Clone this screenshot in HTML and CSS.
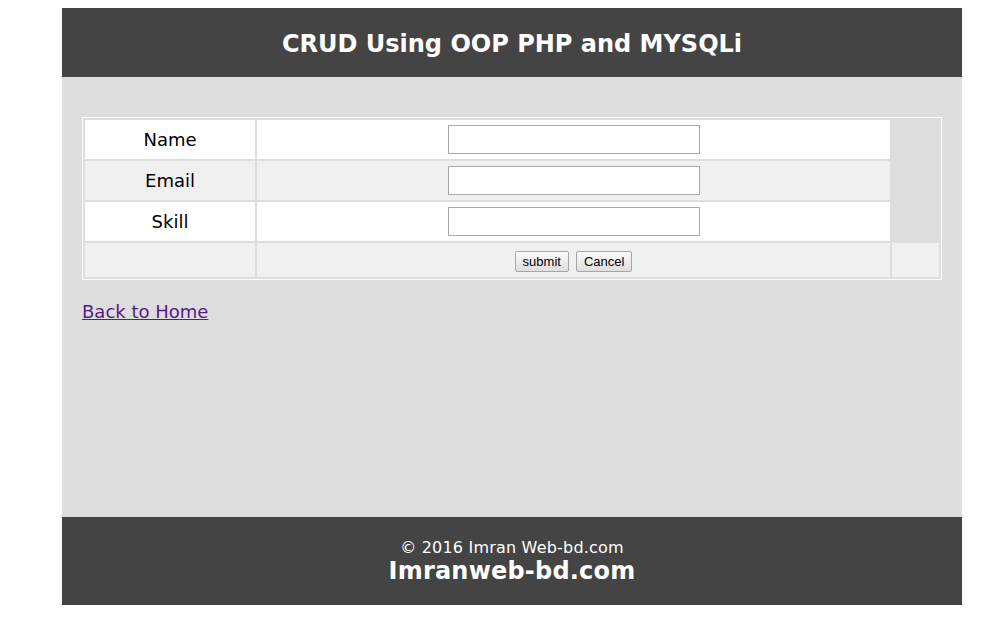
FILE: index.html
```html
<!DOCTYPE html>
<html>
<head>
<meta charset="utf-8">
<title>CRUD Using OOP PHP and MYSQLi</title>
<link rel="stylesheet" href="styles.css">
</head>
<body>
<div class="wrapper">
  <header class="header">
    <h2 class="title">CRUD Using OOP PHP and MYSQLi</h2>
  </header>
  <main class="content">
    <form class="form">
      <table class="form-table">
        <colgroup>
          <col class="col-label">
          <col class="col-field">
          <col class="col-extra">
        </colgroup>
        <tr class="row row-odd">
          <td class="cell label">Name</td>
          <td class="cell field"><input class="text-input" type="text" name="name"></td>
        </tr>
        <tr class="row row-even">
          <td class="cell label">Email</td>
          <td class="cell field"><input class="text-input" type="text" name="email"></td>
        </tr>
        <tr class="row row-odd">
          <td class="cell label">Skill</td>
          <td class="cell field"><input class="text-input" type="text" name="skill"></td>
        </tr>
        <tr class="row row-even row-actions">
          <td class="cell"></td>
          <td class="cell field">
            <div class="actions">
              <button class="btn" type="button">submit</button>
              <button class="btn" type="button">Cancel</button>
            </div>
          </td>
          <td class="cell"></td>
        </tr>
      </table>
    </form>
    <p class="back"><a class="back-link" href="#">Back to Home</a></p>
  </main>
  <footer class="footer">
    <div class="copy">&copy; 2016 Imran Web-bd.com</div>
    <div class="brand">Imranweb-bd.com</div>
  </footer>
</div>
</body>
</html>
```

FILE: styles.css
```css
html, body {
  background: #ffffff;
}
body {
  margin: 8px;
  font-family: "DejaVu Sans", Verdana, sans-serif;
  color: #000;
}
.wrapper {
  width: 900px;
  margin-left: 54px;
}
.header {
  height: 69px;
  box-sizing: border-box;
  padding-top: 22px;
  background: #444444;
}
.title {
  margin: 0;
  font-size: 24px;
  font-weight: bold;
  line-height: 28px;
  color: #ffffff;
  text-align: center;
}
.content {
  height: 440px;
  box-sizing: border-box;
  padding: 40px 20px 0 20px;
  background: #dddddd;
}
.form {
  margin: 0;
}
.form-table {
  width: 860px;
  table-layout: fixed;
  border: 1px solid #ffffff;
  border-spacing: 2px;
  border-collapse: separate;
}
.col-label { width: 170px; }
.col-field { width: 633px; }
.col-extra { width: 47px; }
.cell {
  padding: 0;
  height: 39px;
  text-align: center;
  vertical-align: middle;
  font-size: 18px;
}
.row-odd .cell { background: #ffffff; }
.row-even .cell { background: #f0f0f0; }
.row-actions .cell { height: 34px; }
.text-input {
  display: block;
  margin: 0 auto;
  width: 252px;
  height: 29px;
  box-sizing: border-box;
  border: 1px solid #a9a9a9;
  background: #fff;
  padding: 1px 2px;
}
.actions {
  display: flex;
  justify-content: center;
  gap: 7px;
  padding-top: 3px;
}
.btn {
  height: 21px;
  box-sizing: border-box;
  padding: 0 7px;
  margin: 0;
  font-family: "Liberation Sans", Arial, sans-serif;
  font-size: 13px;
  color: #000;
  border: 1px solid #a6a6a6;
  border-radius: 2px;
  background: linear-gradient(#fbfbfb, #dedede);
}
.back {
  margin: 21px 0 0 0;
  font-size: 18px;
}
.back-link {
  color: #551a8b;
  text-decoration: underline;
}
.footer {
  height: 88px;
  box-sizing: border-box;
  padding-top: 21px;
  background: #444444;
  color: #ffffff;
  text-align: center;
}
.copy {
  font-size: 16px;
  letter-spacing: 0.2px;
}
.brand {
  font-size: 24px;
  font-weight: bold;
  letter-spacing: 0.2px;
}
```
